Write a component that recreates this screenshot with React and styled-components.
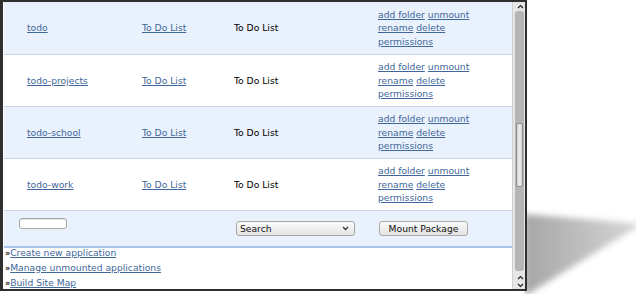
import styled, { createGlobalStyle } from "styled-components";

const GlobalStyle = createGlobalStyle`
  html, body {
    margin: 0;
    padding: 0;
    background: #ffffff;
  }
  body {
    font-family: "DejaVu Sans", "Liberation Sans", sans-serif;
    font-size: 9.2px;
  }
`;

const apps = [
  { name: "todo", title: "To Do List", desc: "To Do List" },
  { name: "todo-projects", title: "To Do List", desc: "To Do List" },
  { name: "todo-school", title: "To Do List", desc: "To Do List" },
  { name: "todo-work", title: "To Do List", desc: "To Do List" },
];

const bottomLinks = [
  "Create new application",
  "Manage unmounted applications",
  "Build Site Map",
];

const Caret = ({ down }) => (
  <svg width="7" height="5" viewBox="0 0 7 5">
    <polyline
      points={down ? "1,1 3.5,3.5 6,1" : "1,4 3.5,1.5 6,4"}
      fill="none"
      stroke="#222"
      strokeWidth="1.2"
    />
  </svg>
);

export default function App() {
  return (
    <>
      <GlobalStyle />
      <Stage>
        <Shadow width="120" height="110" viewBox="0 0 120 110">
          <defs>
            <filter id="blur" x="-20%" y="-20%" width="140%" height="140%">
              <feGaussianBlur stdDeviation="3" />
            </filter>
            <linearGradient id="fade" x1="0" y1="0" x2="1" y2="0">
              <stop offset="0" stopColor="#a6a6a6" />
              <stop offset="1" stopColor="#d8d8d8" />
            </linearGradient>
          </defs>
          <polygon points="0,24 118,34 4,104 0,104" fill="url(#fade)" filter="url(#blur)" />
        </Shadow>
        <Window>
          <Viewport>
            {apps.map((app, i) => (
              <Row key={app.name} $alt={i % 2 === 1} $first={i === 0}>
                <Cell>
                  <Link href="#">{app.name}</Link>
                </Cell>
                <Cell>
                  <Link href="#">{app.title}</Link>
                </Cell>
                <Cell>{app.desc}</Cell>
                <Cell>
                  <Actions>
                    <Link href="#">add folder</Link> <Link href="#">unmount</Link>{" "}
                    <Link href="#">rename</Link> <Link href="#">delete</Link>{" "}
                    <Link href="#">permissions</Link>
                  </Actions>
                </Cell>
              </Row>
            ))}
            <FooterRow>
              <Cell $top>
                <TextInput type="text" />
              </Cell>
              <Cell />
              <Cell>
                <Select>
                  <span>Search</span>
                  <svg width="7" height="5" viewBox="0 0 7 5">
                    <polyline points="1,1 3.5,3.5 6,1" fill="none" stroke="#333" strokeWidth="1.3" />
                  </svg>
                </Select>
              </Cell>
              <Cell>
                <Button>Mount Package</Button>
              </Cell>
            </FooterRow>
            <LinkList>
              {bottomLinks.map((label) => (
                <LinkItem key={label}>
                  <Bullet>»</Bullet>
                  <Link href="#">{label}</Link>
                </LinkItem>
              ))}
            </LinkList>
          </Viewport>
          <Scrollbar>
            <Arrow>
              <Caret />
            </Arrow>
            <Track>
              <Thumb />
            </Track>
            <Arrow>
              <Caret />
            </Arrow>
            <Arrow>
              <Caret down />
            </Arrow>
          </Scrollbar>
        </Window>
      </Stage>
    </>
  );
}

const Stage = styled.div`
  position: relative;
  width: 636px;
  height: 294px;
  overflow: hidden;
  background: #ffffff;
`;

const Shadow = styled.svg`
  position: absolute;
  left: 524px;
  top: 190px;
`;

const Window = styled.div`
  position: relative;
  box-sizing: border-box;
  width: 527px;
  height: 291px;
  display: flex;
  border: 2px solid #2f2f2f;
  border-left-width: 3px;
  background: #ffffff;
`;

const Viewport = styled.div`
  flex: 1;
  display: flex;
  flex-direction: column;
  overflow: hidden;
  padding-left: 1px;
`;

const Row = styled.div`
  flex-shrink: 0;
  display: grid;
  grid-template-columns: 115px 92px 144px 1fr;
  align-items: center;
  box-sizing: border-box;
  height: ${(p) => (p.$first ? "53px" : "52px")};
  padding-left: 15px;
  background: ${(p) => (p.$alt ? "#ffffff" : "#e9f1fc")};
  border-bottom: 1px solid #c9d5e5;
  color: #000;
`;

const FooterRow = styled(Row).attrs({ $alt: false })`
  height: 37px;
  border-bottom: 2px solid #a9c3ea;
`;

const Cell = styled.div`
  align-self: ${(p) => (p.$top ? "start" : "center")};
  padding: ${(p) => (p.$top ? "7px 8px 0" : "0 8px")};
  line-height: 13.5px;
  white-space: nowrap;
`;

const Actions = styled.div`
  max-width: 110px;
  white-space: normal;
  line-height: 13.5px;
`;

const Link = styled.a`
  color: #41679a;
  text-decoration: underline;
  text-underline-offset: 1px;
`;

const TextInput = styled.input`
  display: block;
  box-sizing: border-box;
  width: 48px;
  height: 11px;
  margin: 0 0 0 -8px;
  padding: 0;
  border: 1px solid #a9a9a9;
  border-radius: 3px;
  background: #ffffff;
  box-shadow: inset 0 1px 1px rgba(0, 0, 0, 0.12);
`;

const Select = styled.div`
  box-sizing: border-box;
  width: 119px;
  height: 15px;
  margin-left: 2px;
  display: flex;
  align-items: center;
  justify-content: space-between;
  padding: 0 5px 0 3px;
  border: 1px solid #a4a4a4;
  border-radius: 3px;
  background: linear-gradient(#fbfbfb, #e4e4e4);
  color: #111;
`;

const Button = styled.div`
  box-sizing: border-box;
  width: 89px;
  height: 15px;
  margin-left: 1px;
  display: flex;
  align-items: center;
  justify-content: center;
  border: 1px solid #a8a8a8;
  border-radius: 3px;
  background: linear-gradient(#fbfbfb, #e2e2e2);
  color: #111;
`;

const LinkList = styled.div`
  flex-shrink: 0;
  margin-top: -2px;
  padding: 0 0 0 1px;
  line-height: 13.8px;
`;

const LinkItem = styled.div`
  white-space: nowrap;
`;

const Bullet = styled.span`
  color: #222;
  font-weight: bold;
  font-size: 8px;
`;

const Scrollbar = styled.div`
  width: 12px;
  display: flex;
  flex-direction: column;
  align-items: stretch;
  background: #e6e6e6;
  border-left: 1px solid #d0d0d0;
`;

const Arrow = styled.div`
  height: 8px;
  display: flex;
  align-items: center;
  justify-content: center;
  padding-left: 2px;
`;

const Track = styled.div`
  flex: 1;
  margin: 1px 1px 2px 2px;
  padding-top: 112px;
  background: #b5b5b5;
  border-radius: 3px;
`;

const Thumb = styled.div`
  height: 64px;
  margin: 0 1px;
  box-sizing: border-box;
  border: 1px solid #8d8d8d;
  border-radius: 2px;
  background: linear-gradient(90deg, #d2d2d2, #ececec 50%, #d4d4d4);
`;
